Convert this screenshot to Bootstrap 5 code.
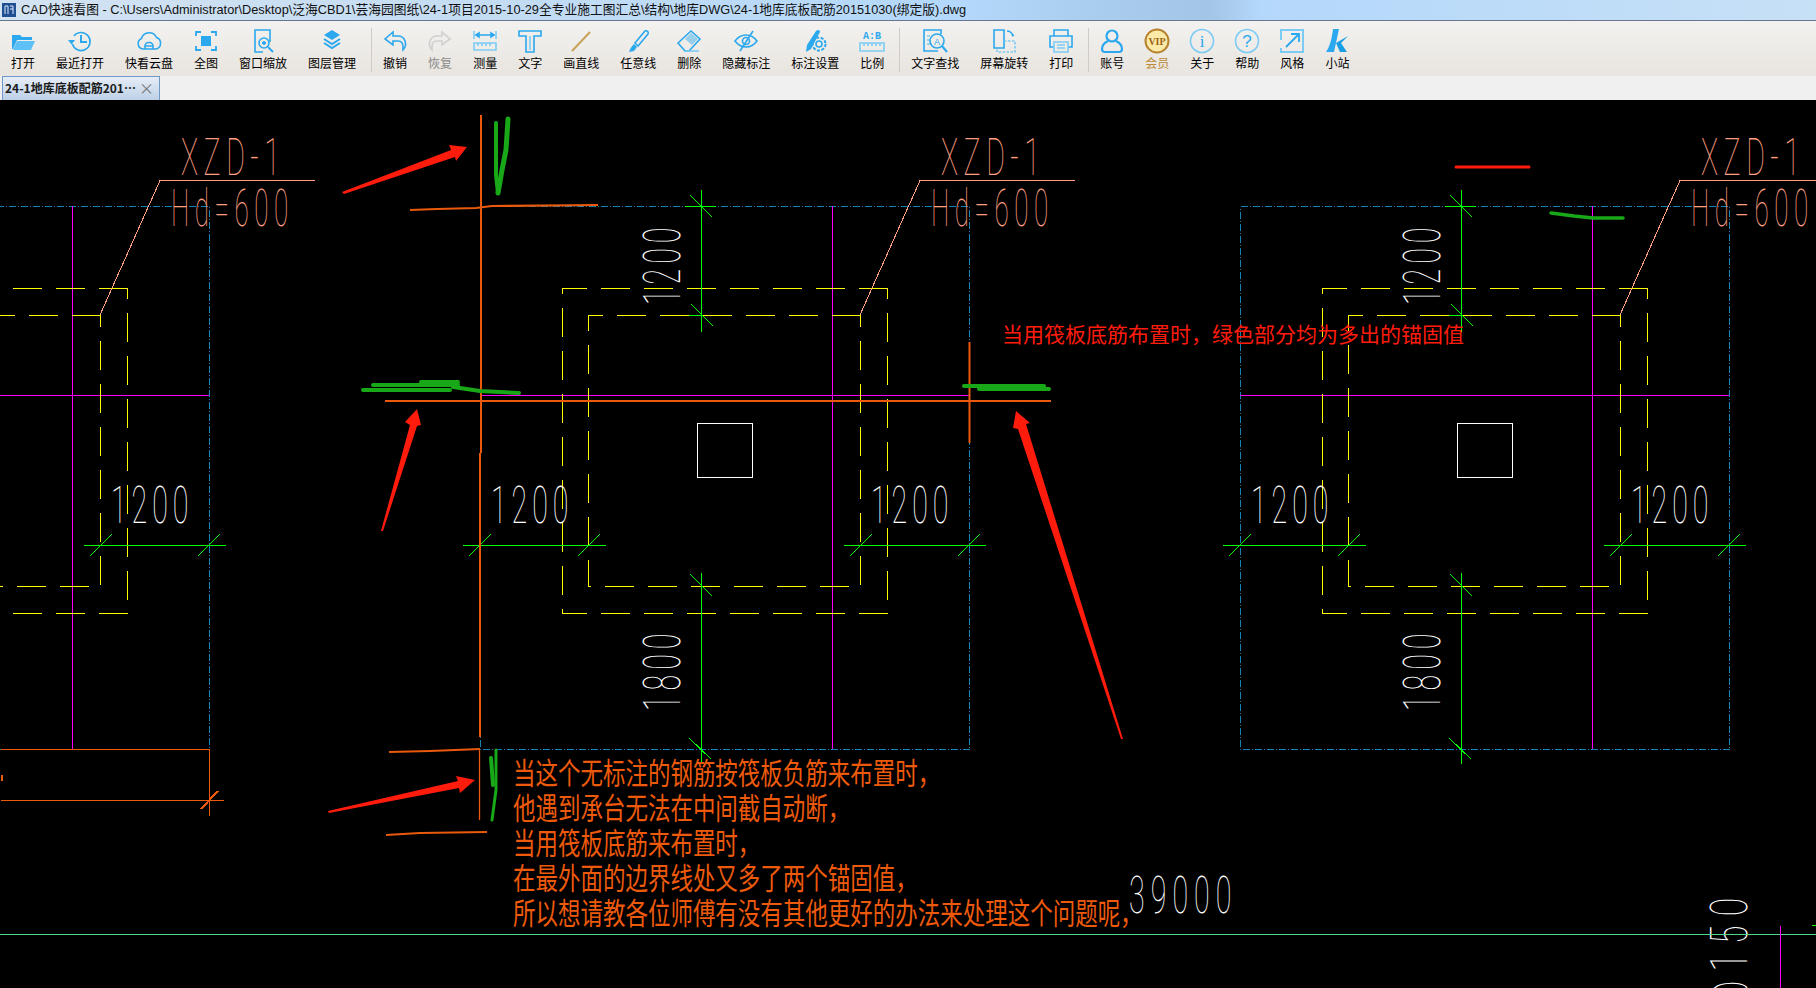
<!DOCTYPE html>
<html lang="zh">
<head>
<meta charset="utf-8">
<title>CAD快速看图</title>
<link rel="stylesheet" href="https://cdn.jsdelivr.net/npm/bootstrap@5.3.0/dist/css/bootstrap.min.css">
<style>
    body { font-family: "Liberation Sans", "Noto Sans CJK SC", sans-serif; background: #000; }
    .app-shell { width: 1816px; height: 988px; }

    .title-strip { height: 20px; padding-left: 2px; font-size: 12.75px; line-height: 20px; color: #111; white-space: nowrap;
        background: linear-gradient(90deg, #d3e3f2 0, #c4dcf3 480px, #b3d8fb 960px, #a9cdec 1100px, #a3c6e6 1210px, #b4d8fb 1260px, #c7e0f6 1816px); }
    .title-strip svg { margin-right: 5px; }

    .tool-strip { height: 56px; padding: 7px 0 0 11px; border-top: 1px solid #64778f;
        background: linear-gradient(180deg, #f3f2f0, #e8e4df); font-family: "Noto Sans CJK SC", sans-serif; }
    .tool-group { gap: 21px; }
    .tool-btn { font-size: 12px; line-height: 16px; color: #000; white-space: nowrap; }
    .tool-btn svg { width: 26px; height: 26px; margin: 0 -1px 1px; fill: none; stroke: #2ba8ee; stroke-width: 1.6; }
    .tool-btn.is-off { color: #8b8b8b; }
    .tool-btn.is-off svg { stroke: #cfcfcf; }
    .tool-btn.is-gold { color: #bd8a35; }
    .tool-sep { width: 1px; height: 44px; margin: 0 11px 0 15px; background: #cfcbc6; }
    .solid { fill: #2ba8ee; stroke: none; }
    .pale { stroke: #7ccbf4; }

    .tab-strip { height: 24px; background: #f0f0f0; font-family: "Noto Sans CJK SC", sans-serif; }
    .doc-tab { width: 158px; height: 24px; margin: 0 0 0 2px; padding-left: 2px; font-size: 12px; font-weight: 700; line-height: 22px; color: #1b1b1b;
        border: 1px solid #6f97c8; border-bottom: 0; background: linear-gradient(180deg, #e6edf6, #bdd0e7); }
    .doc-tab-x { color: #777; font-size: 15px; font-weight: 400; margin-right: 5px; }

    .cad-sheet { display: block; background: #000; }
    .cad-num { font-family: Roboto, "Liberation Sans", sans-serif; font-size: 52px; font-weight: 100; fill: #fff; letter-spacing: 9px; }
    .cad-num-mid { letter-spacing: 11px; }
    .cad-num-wide { letter-spacing: 14px; }
    .cad-tag { font-family: Roboto, "Liberation Sans", sans-serif; font-size: 52px; font-weight: 100; fill: #ff9f80; }
    .note-orange { font-family: "Noto Sans CJK SC", sans-serif; font-size: 30px; fill: #ee5a0c; }
    .note-red { font-family: "Noto Sans CJK SC", sans-serif; font-size: 21px; fill: #ff1c0c; }
</style>
</head>
<body class="overflow-hidden">
<div class="app-shell d-flex flex-column overflow-hidden">

    <div class="title-strip d-flex align-items-center">
        <svg width="14" height="14" viewBox="0 0 14 14"><rect width="14" height="14" fill="#1f4f92"/><path d="M3 3v8M3 3h3v8M8 3h3v8M8 6h3" stroke="#dfeaf6" fill="none"/></svg>
        <span>CAD快速看图 - C:\Users\Administrator\Desktop\泛海CBD1\芸海园图纸\24-1项目2015-10-29全专业施工图汇总\结构\地库DWG\24-1地库底板配筋20151030(绑定版).dwg</span>
    </div>

    <div class="tool-strip d-flex align-items-start">
        <div class="tool-group d-flex">
            <div class="tool-btn d-flex flex-column align-items-center">
                <svg viewBox="0 0 26 26"><path class="solid" d="M2 7h8l2 2h10v3H7L3 21H2z"/><path d="M7 13h18l-4 9H3z" fill="#5dc0f6" stroke="none"/></svg>打开
            </div>
            <div class="tool-btn d-flex flex-column align-items-center">
                <svg viewBox="0 0 26 26"><path d="M7 8a9 9 0 1 1-1.6 8"/><path class="solid" d="M1 12h7l-3.500 4.500z"/><path d="M14 7v7h6" stroke-width="2"/></svg>最近打开
            </div>
            <div class="tool-btn d-flex flex-column align-items-center">
                <svg viewBox="0 0 26 26"><path d="M7 21a5.500 5.500 0 0 1-1.500-10.500 8 8 0 0 1 15-1A6 6 0 0 1 20 21z"/><path d="M9 21v-3a3.500 3.500 0 0 1 3.500-3.500h1A3.500 3.500 0 0 1 17 18v3M9 18h8"/></svg>快看云盘
            </div>
            <div class="tool-btn d-flex flex-column align-items-center">
                <svg viewBox="0 0 26 26"><rect class="solid" x="8" y="8" width="10" height="10"/><path d="M3 8V4h5M18 4h5v4M23 18v4h-5M8 22H3v-4" stroke-width="1.800"/></svg>全图
            </div>
            <div class="tool-btn d-flex flex-column align-items-center">
                <svg viewBox="0 0 26 26"><path d="M13 24H5V2h15v12"/><circle cx="14" cy="15" r="5"/><path d="M18 19l5 5M12 15h4M14 13v4" stroke-width="1.800"/></svg>窗口缩放
            </div>
            <div class="tool-btn d-flex flex-column align-items-center">
                <svg viewBox="0 0 26 26"><path class="solid" d="M13 2l8 5-8 5-8-5z"/><path d="M5 11l8 5 8-5M5 15l8 5 8-5" stroke-width="2"/></svg>图层管理
            </div>
        </div>
        <div class="tool-sep"></div>
        <div class="tool-group d-flex">
            <div class="tool-btn d-flex flex-column align-items-center">
                <svg viewBox="0 0 26 26"><path d="M11 4L3 11l8 6v-4h5c3 0 5 2 5 6v3c3-3 3-6 2-9-1-3-4-5-7-5h-5z"/></svg>撤销
            </div>
            <div class="tool-btn is-off d-flex flex-column align-items-center">
                <svg viewBox="0 0 26 26"><path d="M15 4l8 7-8 6v-4h-5c-3 0-5 2-5 6v3c-3-3-3-6-2-9 1-3 4-5 7-5h5z"/></svg>恢复
            </div>
            <div class="tool-btn d-flex flex-column align-items-center">
                <svg viewBox="0 0 26 26"><path class="pale" d="M2 3v8M24 3v8"/><path d="M4 7h18M4 7l3-2v4zM22 7l-3-2v4z"/><path class="pale" d="M2 15h22v7H2zM6 15v3M10 15v3M14 15v3M18 15v3"/></svg>测量
            </div>
            <div class="tool-btn d-flex flex-column align-items-center">
                <svg viewBox="0 0 26 26"><path d="M2 3h22v5h-7v16h-8V8H2z"/><path class="pale" d="M13 8v14"/></svg>文字
            </div>
            <div class="tool-btn d-flex flex-column align-items-center">
                <svg viewBox="0 0 26 26"><path d="M4 23L22 4" style="stroke:#c7a25a;stroke-width:2"/></svg>画直线
            </div>
            <div class="tool-btn d-flex flex-column align-items-center">
                <svg viewBox="0 0 26 26"><path d="M10 15L20 3c2-1 4 1 3 3L13 18z"/><path class="solid" d="M9 16l3 3-3 4-5 1c1-3 2-5 5-8z"/></svg>任意线
            </div>
            <div class="tool-btn d-flex flex-column align-items-center">
                <svg viewBox="0 0 26 26"><path d="M2 15L15 3l9 8-11 12H9z"/><path class="solid" d="M15 5l7 6-6 6-7-6z" opacity=".45"/><path d="M9 23h14" class="pale"/></svg>删除
            </div>
            <div class="tool-btn d-flex flex-column align-items-center">
                <svg viewBox="0 0 26 26"><path d="M2 13c6-8 16-8 22 0-6 8-16 8-22 0z"/><circle cx="13" cy="13" r="3.500"/><path d="M7 23L20 3"/></svg>隐藏标注
            </div>
            <div class="tool-btn d-flex flex-column align-items-center">
                <svg viewBox="0 0 26 26"><path class="solid" d="M4 24l1-7L14 3c2-2 4-1 4 1L9 21z"/><circle cx="17" cy="16" r="3"/><circle cx="17" cy="16" r="6.500" stroke-dasharray="3 1.500" stroke-width="2"/></svg>标注设置
            </div>
            <div class="tool-btn d-flex flex-column align-items-center">
                <svg viewBox="0 0 26 26"><text x="13" y="11" text-anchor="middle" font-family="Liberation Mono, monospace" font-size="10" font-weight="700" fill="#2ba8ee" stroke="none">A:B</text><path class="pale" d="M1 15h24v8H1zM5 15v3M9 15v3M13 15v3M17 15v3M21 15v3"/></svg>比例
            </div>
        </div>
        <div class="tool-sep"></div>
        <div class="tool-group d-flex">
            <div class="tool-btn d-flex flex-column align-items-center">
                <svg viewBox="0 0 26 26"><path d="M19 6V2H2v21h14"/><path class="pale" d="M5 8h3M5 12h3M5 16h3"/><circle cx="15" cy="13" r="7"/><text x="15" y="16.500" text-anchor="middle" font-family="Liberation Sans, sans-serif" font-size="9" fill="#2ba8ee" stroke="none">A</text><path d="M20 18l5 6" stroke-width="2"/></svg>文字查找
            </div>
            <div class="tool-btn d-flex flex-column align-items-center">
                <svg viewBox="0 0 26 26"><path d="M3 2h10v18H3z"/><path class="pale" d="M13 13h11v11H6v-4" stroke-dasharray="2.500 1.500"/><path d="M16 3c3 0 5 2 6 5M21 8l2-1" stroke-width="1.600"/></svg>屏幕旋转
            </div>
            <div class="tool-btn d-flex flex-column align-items-center">
                <svg viewBox="0 0 26 26"><path d="M6 8V2h14v6"/><path d="M6 19H2V8h22v11h-4"/><path class="pale" d="M6 14h14v10H6zM9 17h8M9 20h8"/></svg>打印
            </div>
        </div>
        <div class="tool-sep"></div>
        <div class="tool-group d-flex">
            <div class="tool-btn d-flex flex-column align-items-center">
                <svg viewBox="0 0 26 26"><circle cx="13" cy="8" r="5.500" stroke-width="2.200"/><path d="M9 13c-4 2-6 5-6 8 0 2 1 3 3 3h14c2 0 3-1 3-3 0-3-2-6-6-8" stroke-width="2.200"/></svg>账号
            </div>
            <div class="tool-btn is-gold d-flex flex-column align-items-center">
                <svg viewBox="0 0 26 26"><circle cx="13" cy="13" r="11.500" style="stroke:#b5832f;stroke-width:2" fill="#fbe9a8"/><text x="13" y="17" text-anchor="middle" font-family="Liberation Serif, serif" font-size="10" font-weight="700" fill="#9a6414" stroke="none">VIP</text></svg>会员
            </div>
            <div class="tool-btn d-flex flex-column align-items-center">
                <svg viewBox="0 0 26 26"><circle cx="13" cy="13" r="11.500" class="pale"/><text x="13" y="19" text-anchor="middle" font-family="Liberation Serif, serif" font-size="17" fill="#2ba8ee" stroke="none">i</text></svg>关于
            </div>
            <div class="tool-btn d-flex flex-column align-items-center">
                <svg viewBox="0 0 26 26"><circle cx="13" cy="13" r="11.500" class="pale"/><text x="13" y="19" text-anchor="middle" font-family="Liberation Sans, sans-serif" font-size="17" fill="#2ba8ee" stroke="none">?</text></svg>帮助
            </div>
            <div class="tool-btn d-flex flex-column align-items-center">
                <svg viewBox="0 0 26 26"><path class="pale" d="M2 12V2h22v22H2v-4" stroke-width="2"/><path d="M7 19L20 6M12 6h8v8" stroke-width="1.800"/></svg>风格
            </div>
            <div class="tool-btn d-flex flex-column align-items-center">
                <svg viewBox="0 0 26 26"><path class="solid" d="M9 1h6L10 24H2c4-6 6-14 7-23z"/><path d="M12 15l12-7-7 7 6 9h-7z" fill="#1a9fe6" stroke="none"/></svg>小站
            </div>
        </div>
    </div>

    <div class="tab-strip d-flex">
        <div class="doc-tab d-flex justify-content-between overflow-hidden">
            <span>24-1地库底板配筋201⋯</span><span class="doc-tab-x">×</span>
        </div>
    </div>

    <svg class="cad-sheet" width="1816" height="888" viewBox="0 100 1816 888">
        <defs>
            <g id="footing" fill="none" shape-rendering="crispEdges" stroke-width="1">
                <path d="M480.500 206.500H969.500V749.500H480.500Z" stroke="#1283b5" stroke-dasharray="7 2 1 2"/>
                <path d="M832.500 206V749M480 395.500H969" stroke="#ff00ff"/>
                <path d="M887.500 288.500H562.500V613.500H887.500V288.500" stroke="#ffff00" stroke-dasharray="29 14"/>
                <path d="M860.500 315.500H588.500V586.500H860.500V315.500" stroke="#ffff00" stroke-dasharray="29 14"/>
                <path d="M860 315L920 180.500H1075" stroke="#ff9f80"/>
                <rect x="697.500" y="423.500" width="55" height="54" stroke="#fff"/>
                <path d="M701.500 190V332M701.500 573V764M685 206.500H716M689 315.500H702M690 195L712 217M691 304L713 326M690 574L712 596M689 738L711 759" stroke="#00ff00"/>
                <path d="M463 545.500H606M469 556L491 534M578 556L600 534M844 545.500H986M850 556L872 534M958 556L980 534" stroke="#00ff00"/>
            </g>
        </defs>

        <use href="#footing" x="-760"/>
        <use href="#footing"/>
        <use href="#footing" x="760"/>

        <g class="cad-tag">
            <text transform="translate(181 175) scale(.55 1)" letter-spacing="10">XZD-1</text>
            <text transform="translate(941 175) scale(.55 1)" letter-spacing="10">XZD-1</text>
            <text transform="translate(1701 175) scale(.55 1)" letter-spacing="10">XZD-1</text>
            <text transform="translate(171 226) scale(.5 1)" letter-spacing="11">Hd=600</text>
            <text transform="translate(931 226) scale(.5 1)" letter-spacing="11">Hd=600</text>
            <text transform="translate(1691 226) scale(.5 1)" letter-spacing="11">Hd=600</text>
        </g>
        <g class="cad-num">
            <text transform="translate(111 523) scale(.55 1)">1200</text>
            <text transform="translate(491 523) scale(.55 1)">1200</text>
            <text transform="translate(871 523) scale(.55 1)">1200</text>
            <text transform="translate(1251 523) scale(.55 1)">1200</text>
            <text transform="translate(1631 523) scale(.55 1)">1200</text>
            <text transform="translate(680 305) rotate(-90) scale(.55 1)">1200</text>
            <text transform="translate(1440 305) rotate(-90) scale(.55 1)">1200</text>
            <text transform="translate(680 711) rotate(-90) scale(.55 1)">1800</text>
            <text transform="translate(1440 711) rotate(-90) scale(.55 1)">1800</text>
            <text class="cad-num-mid" transform="translate(1129 913) scale(.55 1)">39000</text>
            <text class="cad-num-wide" transform="translate(1747 1012) rotate(-90) scale(.65 1)">@150</text>
        </g>

        <g fill="none" shape-rendering="crispEdges">
            <path d="M0 934.500H1816" stroke="#52d684"/>
            <path d="M1780.500 926V988" stroke="#ff00ff"/>
            <path d="M1812 925.500H1816" stroke="#00ff00"/>
            <path d="M1 749.500H209.500V816M1 800.500H224" stroke="#ee5a0c"/>
            <path d="M1.500 775V781" stroke="#ee5a0c" stroke-width="2"/>
            <path d="M201 809L218 791" stroke="#ee5a0c" stroke-width="2"/>
        </g>

        <!-- hand marks on top of the drawing -->
        <g fill="none" stroke="#ea590c">
            <path d="M481 115V453M480 453V737" stroke-width="2"/>
            <path d="M479.500 749V820" stroke-width="1.300"/>
            <path d="M385 401H1051" stroke-width="2.200"/>
            <path d="M969.500 342V443" stroke-width="2"/>
            <path d="M410 210L437 209 476 208 492 206 598 205" stroke-width="2.200"/>
            <path d="M389 752L430 751 480 749" stroke-width="2"/>
            <path d="M386 835L420 833 487 832" stroke-width="2"/>
        </g>
        <g fill="none" stroke="#18a818" stroke-linecap="round">
            <path d="M496 123V175L498 193" stroke-width="4"/>
            <path d="M508 119L506 150 502 170 498 193" stroke-width="5"/>
            <path d="M363 390H450M373 385H458M421 382H458" stroke-width="4"/>
            <path d="M453 387L480 391 519 393" stroke-width="4"/>
            <path d="M964 386H1044" stroke-width="4"/>
            <path d="M979 389H1049" stroke-width="4"/>
            <path d="M1551 213L1574 216 1593 218H1623" stroke-width="3.500"/>
            <path d="M496 750V790L492 820" stroke-width="3"/>
            <path d="M491 758L493 785" stroke-width="4"/>
        </g>
        <g fill="#ff1c0c">
            <polygon points="342,192 344,194 455,157 456,161 467,147 449,145 451,150"/>
            <polygon points="381,531 383,531 417,426 421,425 417,409 405,422 410,425"/>
            <polygon points="1121,739 1123,739 1026,424 1030,423 1016,411 1013,428 1018,429"/>
            <polygon points="328,811 329,813 459,788 460,793 475,780 456,776 458,781"/>
        </g>
        <path d="M1456 167H1529" stroke="#ff1c0c" stroke-width="3" stroke-linecap="round"/>

        <text class="note-red" x="1002" y="342">当用筏板底筋布置时，绿色部分均为多出的锚固值</text>
        <g class="note-orange">
            <text transform="translate(513 784) scale(.75 1)">当这个无标注的钢筋按筏板负筋来布置时，</text>
            <text transform="translate(513 819) scale(.75 1)">他遇到承台无法在中间截自动断，</text>
            <text transform="translate(513 854) scale(.75 1)">当用筏板底筋来布置时，</text>
            <text transform="translate(513 889) scale(.75 1)">在最外面的边界线处又多了两个锚固值，</text>
            <text transform="translate(513 924) scale(.75 1)">所以想请教各位师傅有没有其他更好的办法来处理这个问题呢，</text>
        </g>
    </svg>
</div>
<script src="https://cdn.jsdelivr.net/npm/bootstrap@5.3.0/dist/js/bootstrap.bundle.min.js"></script>
</body>
</html>
